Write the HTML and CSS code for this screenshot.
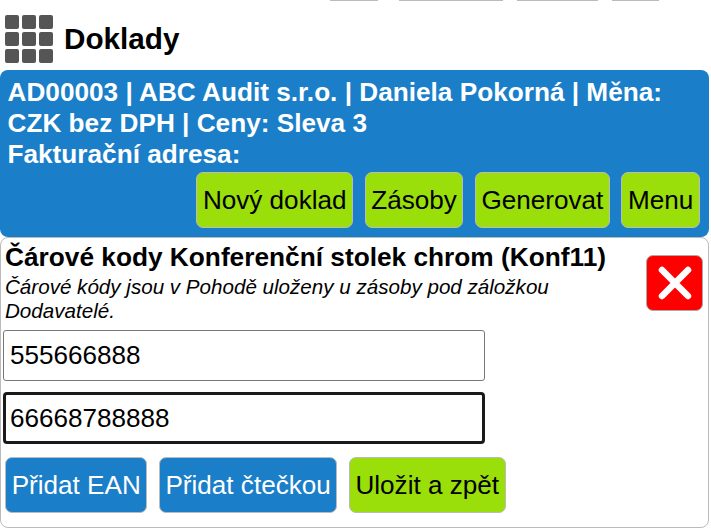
FILE: index.html
```html
<!DOCTYPE html>
<html lang="cs">
<head>
<meta charset="utf-8">
<title>Doklady</title>
<link rel="stylesheet" href="styles.css">
</head>
<body>
<div class="clipped-bar">
  <span class="clip c1"></span><span class="clip c2"></span><span class="clip c3"></span><span class="clip c4"></span>
</div>
<header class="page-head">
  <svg class="grid-icon" width="48" height="48" viewBox="0 0 48 48" aria-hidden="true">
    <rect x="0" y="0" width="14" height="14" rx="2"/><rect x="17" y="0" width="14" height="14" rx="2"/><rect x="34" y="0" width="14" height="14" rx="2"/>
    <rect x="0" y="17" width="14" height="14" rx="2"/><rect x="17" y="17" width="14" height="14" rx="2"/><rect x="34" y="17" width="14" height="14" rx="2"/>
    <rect x="0" y="34" width="14" height="14" rx="2"/><rect x="17" y="34" width="14" height="14" rx="2"/><rect x="34" y="34" width="14" height="14" rx="2"/>
  </svg>
  <h1 class="page-title">Doklady</h1>
</header>
<section class="info">
  <div class="info-text">AD00003 | ABC Audit s.r.o. | Daniela Pokorná | Měna:<br>CZK bez DPH | Ceny: Sleva 3<br>Fakturační adresa:</div>
  <nav class="info-actions">
    <button class="btn green">Nový doklad</button>
    <button class="btn green">Zásoby</button>
    <button class="btn green">Generovat</button>
    <button class="btn green">Menu</button>
  </nav>
</section>
<main class="card">
  <div class="card-head">
    <div class="card-copy">
      <h2 class="card-title">Čárové kody Konferenční stolek chrom (Konf11)</h2>
      <p class="card-note">Čárové kódy jsou v Pohodě uloženy u zásoby pod záložkou Dodavatelé.</p>
    </div>
    <button class="close" aria-label="Zavřít">
      <svg width="34" height="34" viewBox="0 0 34 34" aria-hidden="true"><path d="M4 4 L30 30 M30 4 L4 30" stroke="#fff" stroke-width="6.5" stroke-linecap="round" fill="none"/></svg>
    </button>
  </div>
  <div class="field"><input class="code" value="555666888"></div>
  <div class="field"><input class="code focus" value="66668788888"></div>
  <div class="card-actions">
    <button class="btn blue">Přidat EAN</button>
    <button class="btn blue">Přidat čtečkou</button>
    <button class="btn green">Uložit a zpět</button>
  </div>
</main>
</body>
</html>
```
FILE: styles.css
```css
* { box-sizing: border-box; }
html, body { margin: 0; padding: 0; background: #fff; }
body { font-family: "Liberation Sans", Arial, sans-serif; color: #000; width: 711px; height: 528px; overflow: hidden; }

.clipped-bar { height: 1px; display: flex; padding-left: 330px; }
.clip { display: block; height: 1px; background: #bbb; }
.c1 { width: 48px; margin-right: 21px; }
.c2 { width: 104px; margin-right: 14px; }
.c3 { width: 81px; margin-right: 14px; }
.c4 { width: 47px; }

.page-head { display: flex; align-items: center; height: 69px; padding: 0 0 0 5px; }
.grid-icon { fill: #555; flex: none; margin-right: 11px; margin-top: 7px; }
.page-title { margin: 6px 0 0; font-size: 29.7px; font-weight: 700; line-height: 32px; }

.info { width: 709px; height: 167px; background: #1a7ec8; border-radius: 8px; padding: 7px 8px 0 7.5px; }
.info-text { color: #fff; font-weight: 700; font-size: 26.2px; line-height: 31px; white-space: nowrap; }
.info-actions { display: flex; justify-content: flex-end; gap: 11.33px; margin-top: 2px; padding-right: 1px; }

.btn { height: 56px; padding: 0 5.7px; border: 1px solid #bbb; border-radius: 7px; font: 400 26.1px "Liberation Sans", Arial, sans-serif; white-space: nowrap; }
.green { background: #9ade0a; color: #000; }
.blue { background: #1a7ec8; color: #fff; }

.card { width: 709px; height: 291px; border: 1px solid #bbb; border-radius: 8px; padding: 3px 2px 0; }
.card-head { display: flex; align-items: flex-start; justify-content: space-between; height: 89px; }
.card-copy { width: 600px; padding-left: 2px; }
.card-title { margin: 0; font-size: 26.25px; font-weight: 700; line-height: 32px; white-space: nowrap; }
.card-note { margin: 2px 0 0; font-size: 20.6px; font-style: italic; line-height: 24px; }
.close { width: 57px; height: 56px; margin: 14px 3px 0 0; padding: 0; background: #f00; border: 1px solid #aaa; border-radius: 7px; display: flex; align-items: center; justify-content: center; }

.field { height: 62px; }
.code { display: block; width: 482px; height: 51px; padding: 0 6px; border: 1px solid #777; border-radius: 3px; font: 400 26.1px "Liberation Sans", Arial, sans-serif; color: #000; background: #fff; }
.code.focus { border: 3px solid #1a1a1a; border-radius: 4px; height: 52px; padding: 0 4px; }

.card-actions { display: flex; gap: 11.3px; padding-left: 2px; margin-top: 3px; }
```
